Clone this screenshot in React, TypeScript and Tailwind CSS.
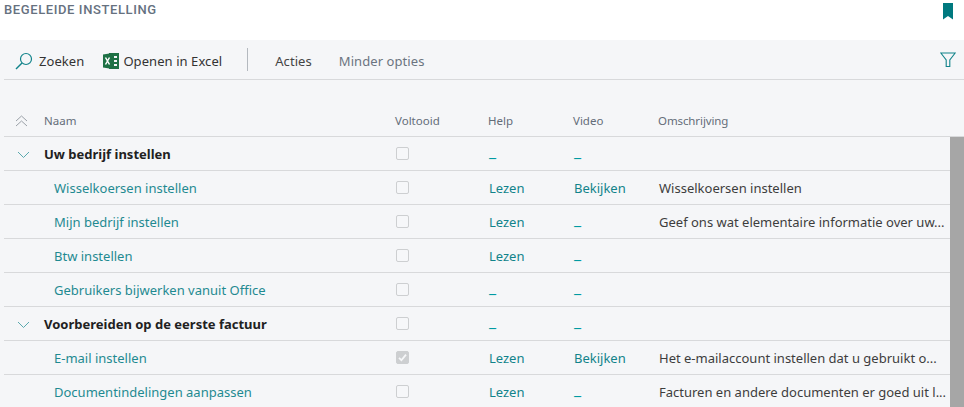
const gridCols = "grid grid-cols-[40px_351px_93px_85px_85px_292px] items-center";

type Row = {
  name: string;
  group?: boolean;
  done?: boolean;
  help: string;
  video: string;
  desc?: string;
};

const rows: Row[] = [
  { name: "Uw bedrijf instellen", group: true, help: "_", video: "_" },
  { name: "Wisselkoersen instellen", help: "Lezen", video: "Bekijken", desc: "Wisselkoersen instellen" },
  { name: "Mijn bedrijf instellen", help: "Lezen", video: "_", desc: "Geef ons wat elementaire informatie over uw..." },
  { name: "Btw instellen", help: "Lezen", video: "_" },
  { name: "Gebruikers bijwerken vanuit Office", help: "_", video: "_" },
  { name: "Voorbereiden op de eerste factuur", group: true, help: "_", video: "_" },
  { name: "E-mail instellen", done: true, help: "Lezen", video: "Bekijken", desc: "Het e-mailaccount instellen dat u gebruikt o..." },
  { name: "Documentindelingen aanpassen", help: "Lezen", video: "_", desc: "Facturen en andere documenten er goed uit l..." },
];

function Checkbox({ checked }: { checked?: boolean }) {
  return (
    <span
      className={
        "flex h-[13px] w-[13px] items-center justify-center rounded-[2px] border border-[#cdcfd1] " +
        (checked ? "bg-[#cdcfd1]" : "bg-[#f6f7f9]")
      }
    >
      {checked && (
        <svg width="9" height="9" viewBox="0 0 9 9" fill="none">
          <path d="M1 4.800 3.400 7.200 8 1.600" stroke="#f6f7f9" strokeWidth="1.800" />
        </svg>
      )}
    </span>
  );
}

function Chevron() {
  return (
    <svg width="13" height="8" viewBox="0 0 13 8" fill="none" className="ml-[13px]">
      <path d="M1 1l5.500 5.500L12 1" stroke="#5aa9ae" strokeWidth="1" />
    </svg>
  );
}

function LinkCell({ value }: { value: string }) {
  return (
    <div className="pl-px text-[#11838a]">
      {value === "_" ? (
        <span className="inline-block -translate-y-[2px] text-[16px] leading-none text-[#009aa3]">_</span>
      ) : (
        value
      )}
    </div>
  );
}

function TableRow({ row }: { row: Row }) {
  return (
    <div className={gridCols + " h-[34px] border-b border-[#d8d9db] pt-[2px] text-[13px] leading-[31px]"}>
      <div className="flex items-center">{row.group && <Chevron />}</div>
      <div className={row.group ? "font-bold text-[#212121]" : "pl-[10px] text-[#1f8a91]"}>{row.name}</div>
      <div className="pl-px">
        <span className="block -translate-y-px">
          <Checkbox checked={row.done} />
        </span>
      </div>
      <LinkCell value={row.help} />
      <LinkCell value={row.video} />
      <div className="pl-px whitespace-nowrap text-[#3d3d3d]">{row.desc}</div>
    </div>
  );
}

export default function App() {
  return (
    <div className="h-[407px] w-[964px] overflow-hidden bg-white font-['Noto_Sans','Open_Sans',sans-serif]">
      <div className="flex h-[40px] items-start justify-between pl-[4px] pr-[11px] pt-[2px]">
        <span className="font-['Roboto',sans-serif] text-[13px] leading-[16px] font-medium tracking-[0.6px] text-[#66717f]">
          BEGELEIDE INSTELLING
        </span>
        <svg width="10" height="17" viewBox="0 0 10 17" className="mt-px" aria-hidden="true">
          <path d="M0 0h10v16.500L5 13 0 16.500z" fill="#00797f" />
        </svg>
      </div>

      <div className="h-[367px] bg-[#f5f6f8] pl-[4px]">
        <div className="flex h-[40px] items-center border-b border-[#d8d9db] pt-[2px] text-[13px] tracking-[0.07px]">
          <svg width="18" height="18" viewBox="0 0 18 18" fill="none" className="ml-[11px]" aria-hidden="true">
            <circle cx="11" cy="7" r="5.500" stroke="#11838a" strokeWidth="1.200" />
            <path d="M7 11 1 17" stroke="#11838a" strokeWidth="1.400" />
          </svg>
          <span className="ml-[6px] pt-[2px] text-[#333333]">Zoeken</span>
          <svg width="16" height="16" viewBox="0 0 16 16" className="ml-[19px]" aria-hidden="true">
            <path d="M6 0h10v16H6z" fill="#1e7145" />
            <path d="M11 3h3v2h-3zM11 7h3v2h-3zM11 11h3v2h-3z" fill="#f5f6f8" />
            <path d="M0 1.500 9.500 0v16L0 14.500z" fill="#1e7145" />
            <path d="M2.500 4.500 6.500 11.500M6.500 4.500 2.500 11.500" stroke="#ffffff" strokeWidth="1.500" />
          </svg>
          <span className="ml-[4px] pt-[2px] text-[#333333]">Openen in Excel</span>
          <div className="mb-[2px] ml-[25px] h-[23px] w-px bg-[#b4b9bf]" />
          <span className="ml-[27px] pt-[2px] text-[#444444]">Acties</span>
          <span className="ml-[27px] pt-[2px] text-[#6b7480]">Minder opties</span>
          <svg width="16" height="16" viewBox="0 0 16 16" fill="none" className="mb-[2px] ml-auto mr-[8px]" aria-hidden="true">
            <path d="M.8 1h14.400L9.800 8v6.500H6.200V8z" stroke="#11838a" strokeWidth="1.100" />
          </svg>
        </div>

        <div className={gridCols + " h-[57px] border-b border-[#d8d9db] pt-[26px] text-[11.500px] leading-[30px] text-[#646d78]"}>
          <div className="flex pl-[11px]">
            <svg width="13" height="12" viewBox="0 0 13 12" fill="none" aria-hidden="true">
              <path d="M1 6l5.500-5L12 6M1 11l5.500-5 5.500 5" stroke="#9ba1a8" strokeWidth="1" />
            </svg>
          </div>
          <div>Naam</div>
          <div>Voltooid</div>
          <div>Help</div>
          <div>Video</div>
          <div className="tracking-[-0.1px]">Omschrijving</div>
        </div>

        <div className="flex">
          <div className="w-[946px] shrink-0">
            {rows.map((row) => (
              <TableRow key={row.name} row={row} />
            ))}
          </div>
          <div className="h-[270px] w-[14px] shrink-0 bg-[#a6a6a6]" />
        </div>
      </div>
    </div>
  );
}
